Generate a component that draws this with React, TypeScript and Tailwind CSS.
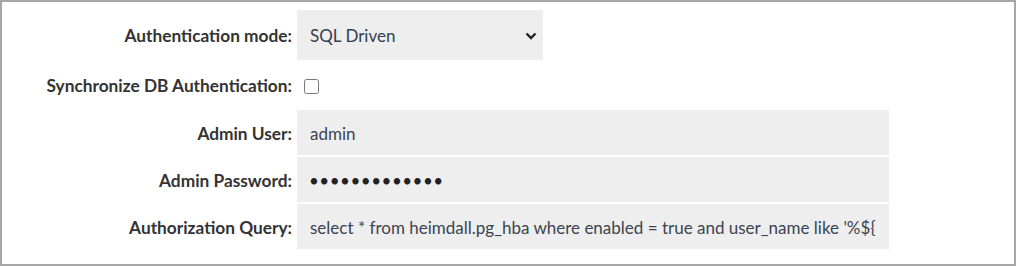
import React from 'react'

const labelCls =
  'flex items-center justify-end pt-[2px] text-[17.3px] font-bold text-[#333333] whitespace-nowrap'

function Field({ label, children, h }: { label: string; children: React.ReactNode; h: string }) {
  return (
    <div className={`grid grid-cols-[290px_592px] gap-x-[5px] ${h}`}>
      <div className={labelCls}>{label}</div>
      <div className="flex items-stretch">{children}</div>
    </div>
  )
}

export default function App() {
  return (
    <div
      className="w-[1016px] h-[266px] bg-white border-2 border-[#a6a6a6] pt-[8px] box-border"
      style={{ fontFamily: 'Lato, "Open Sans", sans-serif' }}
    >
      <Field label="Authentication mode:" h="h-[50px]">
        <div className="w-[246px] bg-[#eeeeee] flex items-center justify-between pt-[2px] pl-[13px] pr-[6px] text-[17px] text-[#34404f]">
          <span>SQL Driven</span>
          <svg width="12" height="8" viewBox="0 0 12 8">
            <polyline points="1.5,1.5 6,6 10.5,1.5" fill="none" stroke="#222" strokeWidth="2.4" />
          </svg>
        </div>
      </Field>

      <Field label="Synchronize DB Authentication:" h="h-[50px]">
        <div className="flex items-center pt-[2px] pl-[7px]">
          <input type="checkbox" className="w-[15px] h-[15px] m-0" />
        </div>
      </Field>

      <div className="flex flex-col gap-[2px]">
        <Field label="Admin User:" h="h-[45px]">
          <div className="flex-1 bg-[#eeeeee] flex items-center pt-[2px] pl-[13px] text-[17px] text-[#3c4451]">
            admin
          </div>
        </Field>
        <Field label="Admin Password:" h="h-[45px]">
          <div className="flex-1 bg-[#eeeeee] flex items-center pt-[2px] pl-[12px] text-[17px] text-[#222] tracking-[0.5px]">
            •••••••••••••
          </div>
        </Field>
        <Field label="Authorization Query:" h="h-[45px]">
          <div className="flex-1 bg-[#eeeeee] flex items-center pt-[2px] pl-[13px] text-[17px] text-[#3c4451] whitespace-nowrap overflow-hidden">
            select * from heimdall.pg_hba where enabled = true and user_name like '%${'{'}
          </div>
        </Field>
      </div>
    </div>
  )
}
